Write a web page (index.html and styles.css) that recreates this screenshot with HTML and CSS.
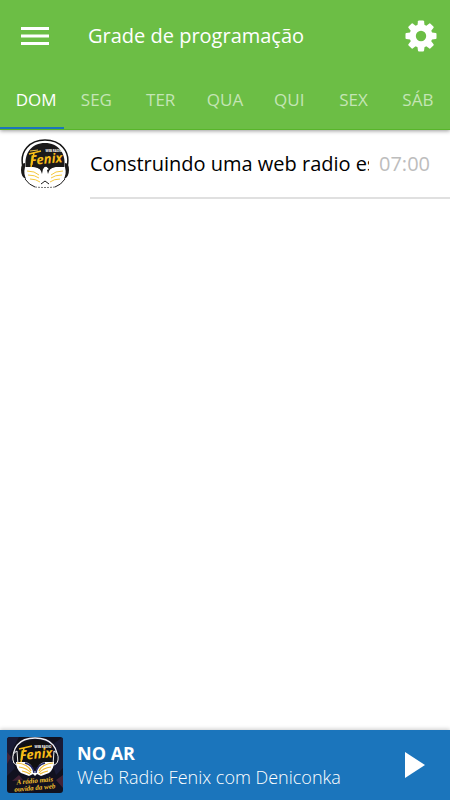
FILE: index.html
```html
<!DOCTYPE html>
<html lang="pt-BR">
<head>
<meta charset="utf-8">
<meta name="viewport" content="width=device-width, initial-scale=1">
<title>Grade de programação</title>
<link rel="stylesheet" href="styles.css">
</head>
<body>
<header class="header">
  <div class="toolbar">
    <button class="icon-button" type="button" aria-label="Menu">
      <svg class="icon-menu" viewBox="0 0 28 20" aria-hidden="true"><path d="M0 2.500h28M0 10h28M0 17.500h28"/></svg>
    </button>
    <h1 class="title">Grade de programação</h1>
    <button class="icon-button" type="button" aria-label="Configurações">
      <svg class="icon-gear" viewBox="0 0 32 32" aria-hidden="true">
        <defs>
          <mask id="hole"><rect width="32" height="32" fill="#fff"/><circle cx="16" cy="16" r="5.200" fill="#000"/></mask>
          <path id="tooth" d="M13 1.200Q13.100.500 14 .500h4Q18.900.500 19 1.200L19.800 7h-7.600z"/>
        </defs>
        <g mask="url(#hole)">
          <circle cx="16" cy="16" r="11.500"/>
          <use href="#tooth"/>
          <use href="#tooth" transform="rotate(45 16 16)"/>
          <use href="#tooth" transform="rotate(90 16 16)"/>
          <use href="#tooth" transform="rotate(135 16 16)"/>
          <use href="#tooth" transform="rotate(180 16 16)"/>
          <use href="#tooth" transform="rotate(225 16 16)"/>
          <use href="#tooth" transform="rotate(270 16 16)"/>
          <use href="#tooth" transform="rotate(315 16 16)"/>
        </g>
      </svg>
    </button>
  </div>
  <nav class="tabs" aria-label="Dias da semana">
    <button class="tab tab-active" type="button" aria-current="true">DOM</button>
    <button class="tab" type="button">SEG</button>
    <button class="tab" type="button">TER</button>
    <button class="tab" type="button">QUA</button>
    <button class="tab" type="button">QUI</button>
    <button class="tab" type="button">SEX</button>
    <button class="tab" type="button">SÁB</button>
  </nav>
</header>

<main class="schedule">
  <ul class="list">
    <li class="item">
      <svg class="item-logo" viewBox="0 0 50 50" aria-hidden="true">
        <path d="M3 28C-1 12 10 1 25 1s26 11 22 27" fill="#fff" stroke="#141414" stroke-width="1.500"/>
        <path d="M6 30C3 14 12 4 25 4s22 10 19 26z" fill="#1b1a1a"/>
        <path d="M5 24q-4 0-4 7t5 9zM45 24q4 0 4 7t-5 9z" fill="#1b1a1a"/>
        <path d="M5 28h8q7 0 9 6l1-4q1-3 4-2l2 2-2 1 1 3q2-6 8-6h9q2 8-2 13-7 8-18 8T7 41Q3 36 5 28z" fill="#fff"/>
        <path d="M15 28h20q-6 1-7 7l-1-4 2-1-2-2q-3-1-4 2l-1 5q-1-6-7-7z" fill="#1b1a1a"/>
        <path d="M7 32q8 0 12 4M8 36q7 0 11 3M10 40q6 0 10 3M43 32q-8 0-12 4M42 36q-7 0-11 3M40 40q-6 0-10 3" fill="none" stroke="#f5c93f"/>
        <path d="M5 40q4 6 10 8M45 40q-4 6-10 8M21 45l4-3 4 3" fill="none" stroke="#1b1a1a"/>
        <path d="M10 12l8-1" stroke="#eac04a" fill="none"/>
        <text class="mark-small" x="34" y="13">WEB RADIO</text>
        <text class="mark-name" x="10" y="26" transform="rotate(-5 10 26)">Fenix</text>
        <path d="M9 15l12-3M14 14l-3 14" fill="none" stroke="#f8bd18" stroke-width="1.500"/>
        <path d="M15 48q10 1 20 0" fill="none" stroke="#777" stroke-dasharray="2 1"/>
      </svg>
      <span class="item-name">Construindo uma web radio es</span>
      <time class="item-time">07:00</time>
    </li>
  </ul>
</main>

<footer class="player">
  <svg class="cover" viewBox="0 0 56 56" aria-hidden="true">
    <rect width="56" height="56" fill="#11111f"/>
    <path d="M0 0h12L3 17l5 14-8 8zM56 0v31l-7 7-3-9 7-12-7-10z" fill="#191b36"/>
    <path d="M0 15l4 5-4 7zM49 43l7-5v13zM5 44l7-6 4 5z" fill="#422235"/>
    <path d="M7 26C4 11 12 1 28 1s25 10 21 25" fill="none" stroke="#eeeef5" stroke-width="1.500"/>
    <path d="M11 23C9 11 16 4 28 3s19 7 17 19l-4 8H15z" fill="#101012"/>
    <path d="M10 14q-5 2-4 9 1 5 5 5zM47 14q5 2 4 9-1 5-5 5z" fill="#11121e" stroke="#eee"/>
    <path d="M9 25h9q6 1 8 7l2 3 2-3q2-6 8-7h9q0 7-5 11l-8 3-4-2-2 2-2-2-4 2-8-3q-5-4-5-11z" fill="#fff"/>
    <path d="M10 26q11 1 14 8M12 30q8 1 12 6M15 34q5 1 8 3M46 26q-11 1-14 8M44 30q-8 1-12 6M41 34q-5 1-8 3" fill="none" stroke="#efbb32" stroke-width="1.200"/>
    <path d="M18 26q8 2 9 10M38 26q-8 2-9 10" fill="none" stroke="#222767" stroke-width="1.500"/>
    <text class="mark-small" x="36" y="11">WEB RADIO</text>
    <text class="mark-name" x="13" y="23" transform="rotate(-5 13 23)">Fenix</text>
    <path d="M12 12l13-3M17 11l-3 14" fill="none" stroke="#f8bd18" stroke-width="1.500"/>
    <text class="mark-slogan" x="28" y="46" transform="rotate(-5 28 46)">A rádio mais</text>
    <text class="mark-slogan" x="28" y="53" transform="rotate(-5 28 53)">ouvida da web</text>
  </svg>
  <div class="now">
    <strong class="now-label">NO AR</strong>
    <span class="now-name">Web Radio Fenix com Deniconka</span>
  </div>
  <button class="icon-button" type="button" aria-label="Reproduzir">
    <svg class="icon-play" viewBox="0 0 20 26" aria-hidden="true"><path d="M0 0l20 13L0 26z"/></svg>
  </button>
</footer>
</body>
</html>
```

FILE: styles.css
```css
* {
  box-sizing: border-box;
}

body {
  margin: 0;
  min-height: 100vh;
  display: flex;
  flex-direction: column;
  background: #fff;
  color: #000;
  font-family: "Open Sans", "Noto Sans", sans-serif;
}

button {
  border: 0;
  padding: 0;
  background: none;
  color: inherit;
  font: inherit;
  cursor: pointer;
}

svg {
  display: block;
}

.header {
  background: #6cbe45;
  color: #fff;
  border-bottom: 1px solid #58b52a;
  box-shadow: 0 1px 4px rgba(0, 0, 0, 0.4);
}

.toolbar {
  display: flex;
  align-items: center;
  height: 72px;
  padding: 0 13px 0 20px;
}

.icon-button {
  display: flex;
  align-items: center;
  justify-content: center;
}

.icon-menu {
  width: 30px;
  height: 20px;
  fill: none;
  stroke: #fff;
  stroke-width: 3;
}

.icon-gear {
  width: 32px;
  height: 32px;
  fill: #fff;
}

.title {
  flex: 1;
  margin: 0 0 0 38px;
  font-size: 20px;
  font-weight: 400;
  line-height: 28px;
}

.tabs {
  display: grid;
  grid-template-columns: repeat(7, 1fr);
  height: 57px;
}

.tab {
  border-bottom: 2px solid transparent;
  color: #c4e5b5;
  font-size: 17px;
  text-align: center;
}

.tab-active {
  padding-left: 8px;
  border-bottom-color: #1b75bc;
  color: #fff;
}

.schedule {
  flex: 1;
}

.list {
  margin: 0;
  padding: 0;
  list-style: none;
}

.item {
  display: grid;
  grid-template-columns: 50px 1fr auto;
  align-items: center;
  height: 69px;
  padding: 0 20px 2px;
  background: linear-gradient(#e0e0e0, #e0e0e0) 90px 100% / 100% 2px no-repeat;
}

.item-logo {
  width: 50px;
  height: 50px;
}

.item-name {
  margin: 0 10px 0 20px;
  overflow: hidden;
  font-size: 20px;
  white-space: nowrap;
}

.item-time {
  color: #bdbdbd;
  font-size: 20px;
}

.mark-small {
  fill: #fff;
  font: bold 3px "Open Sans", sans-serif;
  text-anchor: middle;
}

.mark-name {
  fill: #f8bd18;
  font: italic bold 13px "Open Sans", sans-serif;
}

.mark-slogan {
  fill: #f5c22d;
  font: italic bold 7px "Liberation Serif", serif;
  text-anchor: middle;
}

.player {
  display: flex;
  align-items: center;
  height: 70px;
  padding: 0 24px 0 7px;
  background: #1b75bc;
  color: #fff;
  box-shadow: 0 -1px 4px rgba(0, 0, 0, 0.2);
}

.cover {
  width: 56px;
  height: 56px;
  border-radius: 3px;
}

.now {
  flex: 1;
  min-width: 0;
  margin-left: 14px;
  font-size: 18px;
  line-height: 24px;
}

.now-label,
.now-name {
  display: block;
}

.now-name {
  font-weight: 300;
}

.icon-play {
  width: 22px;
  height: 26px;
  fill: #fff;
}
```
